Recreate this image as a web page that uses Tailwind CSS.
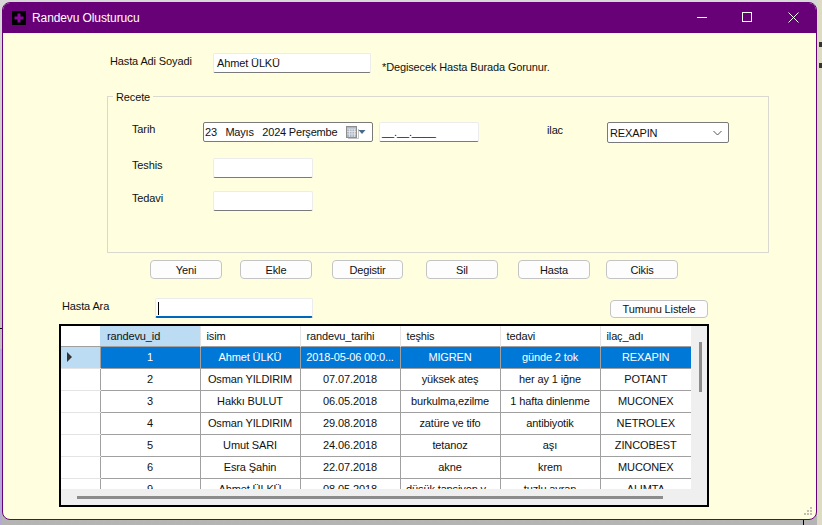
<!DOCTYPE html>
<html lang="tr">
  <head>
    <meta charset="UTF-8" />
    <title>Randevu Olusturucu</title>
    <script src="https://cdn.jsdelivr.net/npm/@tailwindcss/browser@4"></script>
  </head>
  <body class="relative w-[822px] h-[525px] overflow-hidden bg-gradient-to-b from-[#d8d8d8] to-[#b4b4b4] font-['Liberation_Sans',sans-serif] text-[11px] tracking-[-0.13px] leading-[14px] text-[#111]">
    <!-- desktop slivers behind the window -->
    <div class="absolute right-0 top-0 bottom-0 w-[5px] bg-[#dcdcc4]"></div>
    <div class="absolute left-[819px] top-[42px] w-[3px] h-[5px] bg-[#333]"></div>
    <div class="absolute left-[819px] top-[63px] w-[3px] h-[5px] bg-[#333]"></div>
    <div class="absolute left-0 top-[328px] w-[2px] h-px bg-black"></div>
    <div class="absolute left-0 top-[349px] w-[2px] h-[176px] bg-[#b4a8d8]"></div>
    <div class="absolute left-[803px] top-[520px] w-px h-[5px] bg-black"></div>

    <div class="absolute left-[2px] top-[2px] w-[815px] h-[518px] rounded-[8px] bg-[#ffffe0] border border-[#680077] overflow-hidden flex flex-col">
      <header class="h-[30px] shrink-0 bg-[#680077] flex items-center text-white">
        <svg class="ml-[9px] mr-[6px]" width="14" height="14" viewBox="0 0 14 14">
          <rect width="14" height="14" fill="#000" />
          <path d="M5.500 2.500h3v3h3v3h-3v3h-3v-3h-3v-3h3z" fill="#8a0a9e" />
        </svg>
        <span class="text-[12px] tracking-[-0.1px]">Randevu Olusturucu</span>
        <div class="ml-auto flex items-center mb-[2px]">
          <svg class="mr-[35px]" width="10" height="10" viewBox="0 0 10 10"><path d="M0 5.500h10" stroke="#fff" /></svg>
          <svg class="mr-[36px]" width="10" height="10" viewBox="0 0 10 10"><rect x=".5" y=".5" width="9" height="9" fill="none" stroke="#fff" /></svg>
          <svg class="mr-[17px]" width="11" height="11" viewBox="0 0 11 11"><path d="M.5.5l10 10M10.500.5l-10 10" stroke="#fff" /></svg>
        </div>
      </header>

      <main class="relative flex-1 flex flex-col">
        <!-- patient row -->
        <div class="flex items-start pl-[107px] pt-[20px]">
          <label class="w-[103px] pt-[1px]">Hasta Adi Soyadi</label>
          <div class="w-[158px] h-[20px] bg-white border border-[#ececec] border-b-[#7a7a7a] rounded-[2px] px-[3px] pt-[2px]">Ahmet ÜLKÜ</div>
          <span class="ml-[11px] pt-[7px]">*Degisecek Hasta Burada Gorunur.</span>
        </div>

        <!-- recete group -->
        <section class="relative ml-[104px] mt-[22px] w-[662px] h-[157px] border border-[#d9d9d2]">
          <span class="absolute left-[5px] top-[-7px] bg-[#ffffe0] px-[3px]">Recete</span>
          <div class="flex pt-[25px] pl-[24px]">
            <label class="w-[71px]">Tarih</label>
            <div class="w-[170px] h-[20px] bg-white border border-[#7a7a7a] rounded-[2px] flex items-center pl-[1px]">
              <span class="whitespace-pre tracking-[-0.2px]">23   Mayıs   2024 Perşembe</span>
              <svg class="ml-auto mr-[5px] shrink-0" width="22" height="14" viewBox="0 0 22 14">
                <path d="M3 13.500h10.500V4" fill="none" stroke="#c4c4c4" />
                <rect x="1.500" y="1.500" width="10" height="11" fill="#aeb6c2" stroke="#8e8e8e" />
                <path d="M2 4h9M2 6.500h9M2 9h9M4.500 4v8M7 4v8M9.500 4v8" stroke="#e6e9ee" stroke-width=".8" />
                <path d="M13.500 5h7l-3.500 4z" fill="#4a6a8c" />
              </svg>
            </div>
            <div class="ml-[6px] w-[100px] h-[20px] bg-white border border-[#ececec] border-b-[#7a7a7a] rounded-[2px] pl-[2px] pt-[2px] whitespace-pre">__.__.____</div>
            <label class="ml-[68px] w-[60px] pt-[1px]">ilac</label>
            <div class="w-[122px] h-[21px] bg-white border border-[#7a7a7a] rounded-[2px] flex items-center justify-between pl-[2px] pr-[6px]">
              <span>REXAPIN</span>
              <svg width="9" height="6" viewBox="0 0 9 6"><path d="M.5 1l4 4 4-4" fill="none" stroke="#555" /></svg>
            </div>
          </div>
          <div class="flex pl-[24px] mt-[15px]">
            <label class="w-[81px]">Teshis</label>
            <div class="w-[100px] h-[20px] bg-white border border-[#ececec] border-b-[#7a7a7a] rounded-[2px]"></div>
          </div>
          <div class="flex pl-[24px] mt-[13px]">
            <label class="w-[81px]">Tedavi</label>
            <div class="w-[100px] h-[20px] bg-white border border-[#ececec] border-b-[#7a7a7a] rounded-[2px]"></div>
          </div>
        </section>

        <!-- buttons -->
        <div class="flex pl-[147px] mt-[7px] h-[19px]">
          <button class="w-[72px] h-[19px] bg-[#fdfdfd] border border-[#c4c4c4] rounded-[4px]">Yeni</button>
          <button class="ml-[18px] w-[72px] h-[19px] bg-[#fdfdfd] border border-[#c4c4c4] rounded-[4px]">Ekle</button>
          <button class="ml-[20px] w-[71px] h-[19px] bg-[#fdfdfd] border border-[#c4c4c4] rounded-[4px]">Degistir</button>
          <button class="ml-[23px] w-[72px] h-[19px] bg-[#fdfdfd] border border-[#c4c4c4] rounded-[4px]">Sil</button>
          <button class="ml-[20px] w-[72px] h-[19px] bg-[#fdfdfd] border border-[#c4c4c4] rounded-[4px]">Hasta</button>
          <button class="ml-[16px] w-[72px] h-[19px] bg-[#fdfdfd] border border-[#c4c4c4] rounded-[4px]">Cikis</button>
        </div>

        <!-- search -->
        <div class="flex items-start pl-[59px] mt-[19px] h-[20px]">
          <label class="w-[93px] pt-[1px]">Hasta Ara</label>
          <div class="w-[158px] h-[20px] bg-white border border-[#ececec] border-b-2 border-b-[#0067c0] rounded-[2px] pl-[2px] pt-[3px]">
            <div class="w-px h-[13px] bg-black"></div>
          </div>
          <button class="ml-[297px] mt-[2px] w-[98px] h-[18px] bg-[#fdfdfd] border border-[#c4c4c4] rounded-[4px]">Tumunu Listele</button>
        </div>

        <!-- grid -->
        <div class="relative ml-[56px] mt-[6px] w-[650px] h-[183px] bg-[#efefef] border-2 border-black overflow-hidden">
          <div class="w-[630px] h-[163px] overflow-hidden bg-white">
            <table class="table-fixed border-collapse w-[630px] text-center">
              <colgroup>
                <col class="w-[39px]" /><col class="w-[100px]" /><col class="w-[100px]" /><col class="w-[100px]" /><col class="w-[100px]" /><col class="w-[100px]" /><col class="w-[91px]" />
              </colgroup>
              <thead>
                <tr class="h-[20px] text-left border-b border-b-[#a0a0a0]">
                  <th class="font-normal"></th>
                  <th class="font-normal pl-[7px] bg-[#bcdcf4]">randevu_id</th>
                  <th class="font-normal pl-[6px] border-l border-[#e4e4e4]">isim</th>
                  <th class="font-normal pl-[6px] border-l border-[#e4e4e4]">randevu_tarihi</th>
                  <th class="font-normal pl-[6px] border-l border-[#e4e4e4]">teşhis</th>
                  <th class="font-normal pl-[6px] border-l border-[#e4e4e4]">tedavi</th>
                  <th class="font-normal pl-[6px] border-l border-[#e4e4e4]">ilaç_adı</th>
                </tr>
              </thead>
              <tbody class="[&_tr]:h-[22px] [&_td]:border [&_td]:border-[#a0a0a0] [&_td]:whitespace-nowrap [&_td]:overflow-hidden [&_td:first-child]:border-0 [&_td:first-child]:border-b [&_td:first-child]:border-b-[#e4e4e4] [&_td:last-child]:border-r-0">
                <tr class="bg-[#0078d7] text-white">
                  <td class="bg-[#bcdcf4]">
                    <svg class="ml-[5px]" width="7" height="10" viewBox="0 0 7 10"><path d="M1 0l5 5-5 5z" fill="#333" /></svg>
                  </td>
                  <td>1</td><td>Ahmet ÜLKÜ</td><td>2018-05-06 00:0...</td><td>MIGREN</td><td>günde 2 tok</td><td>REXAPIN</td>
                </tr>
                <tr><td></td><td>2</td><td>Osman YILDIRIM</td><td>07.07.2018</td><td>yüksek ateş</td><td>her ay 1 iğne</td><td>POTANT</td></tr>
                <tr><td></td><td>3</td><td>Hakkı BULUT</td><td>06.05.2018</td><td>burkulma,ezilme</td><td>1 hafta dinlenme</td><td>MUCONEX</td></tr>
                <tr><td></td><td>4</td><td>Osman YILDIRIM</td><td>29.08.2018</td><td>zatüre ve tifo</td><td>antibiyotik</td><td>NETROLEX</td></tr>
                <tr><td></td><td>5</td><td>Umut SARI</td><td>24.06.2018</td><td>tetanoz</td><td>aşı</td><td>ZINCOBEST</td></tr>
                <tr><td></td><td>6</td><td>Esra Şahin</td><td>22.07.2018</td><td>akne</td><td>krem</td><td>MUCONEX</td></tr>
                <tr><td></td><td>9</td><td>Ahmet ÜLKÜ</td><td>08.05.2018</td><td>düşük tansiyon v...</td><td>tuzlu ayran</td><td>ALIMTA</td></tr>
              </tbody>
            </table>
          </div>
          <!-- scrollbar thumbs -->
          <div class="absolute left-[638px] top-[16px] w-[3px] h-[50px] bg-[#8c8c8c]"></div>
          <div class="absolute left-[16px] top-[170px] w-[586px] h-[3px] bg-[#8c8c8c]"></div>
        </div>

        <!-- resize grip -->
        <svg class="absolute right-[3px] bottom-[3px]" width="9" height="9" viewBox="0 0 9 9" fill="#c0c0b4">
          <rect x="6" y="0" width="2" height="2" /><rect x="3" y="3" width="2" height="2" /><rect x="6" y="3" width="2" height="2" /><rect x="0" y="6" width="2" height="2" /><rect x="3" y="6" width="2" height="2" /><rect x="6" y="6" width="2" height="2" />
        </svg>
      </main>
    </div>
  </body>
</html>
